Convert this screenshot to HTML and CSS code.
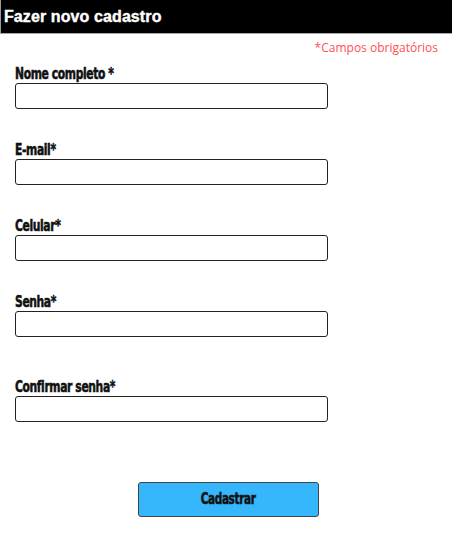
FILE: index.html
```html
<!DOCTYPE html>
<html lang="pt-BR">
<head>
<meta charset="utf-8">
<title>Fazer novo cadastro</title>
<link rel="stylesheet" href="styles.css">
</head>
<body>
<header class="topbar"><h1 class="title">Fazer novo cadastro</h1></header>
<p class="required">*Campos obrigatórios</p>
<form class="form">
  <div class="field"><label class="label" for="nome">Nome completo *</label><input class="input" id="nome" type="text"></div>
  <div class="field"><label class="label" for="email">E-mail*</label><input class="input" id="email" type="email"></div>
  <div class="field"><label class="label" for="cel">Celular*</label><input class="input" id="cel" type="tel"></div>
  <div class="field"><label class="label" for="senha">Senha*</label><input class="input" id="senha" type="password"></div>
  <div class="field field-wide"><label class="label" for="conf">Confirmar senha*</label><input class="input" id="conf" type="password"></div>
  <div class="actions"><button class="button" type="button"><span class="button-text">Cadastrar</span></button></div>
</form>
</body>
</html>
```
FILE: styles.css
```css
* { box-sizing: border-box; }
body {
  margin: 0;
  background: #fff;
  font-family: "Liberation Sans", Arial, sans-serif;
}
.topbar {
  height: 34px;
  background: #000;
  border-left: 1px solid #9a9a9a;
  border-bottom: 1px solid #a8a8a8;
  display: flex;
  align-items: center;
  padding-left: 3px;
}
.title {
  margin: 0;
  color: #fff;
  font-size: 16px;
  font-weight: bold;
  letter-spacing: 0.1px;
  -webkit-text-stroke: 0.4px #fff;
}
.required {
  margin: 5px 14px 0 0;
  text-align: right;
  color: #ff4f4f;
  font-family: "Open Sans", sans-serif;
  font-size: 12px;
  line-height: 18px;
}
.form {
  padding: 0 0 0 15px;
  margin-top: 8px;
  display: flex;
  flex-direction: column;
}
.field {
  display: flex;
  flex-direction: column;
  align-items: flex-start;
  margin-bottom: 32px;
}
.field-wide { margin-top: 9px; }
.label {
  font-family: "DejaVu Sans", sans-serif;
  font-stretch: condensed;
  font-weight: bold;
  font-size: 15px;
  line-height: 18px;
  color: #111;
  letter-spacing: -0.5px;
  transform: scale(0.8, 1.08);
  transform-origin: left bottom;
  white-space: nowrap;
  -webkit-text-stroke: 0.5px #111;
}
.input {
  width: 313px;
  height: 26px;
  border: 1px solid #222;
  border-radius: 3px;
  background: #fff;
  margin: 0;
}
.actions {
  display: flex;
  padding-left: 123px;
  margin-top: 28px;
}
.button {
  width: 181px;
  height: 35px;
  background: #36b6fd;
  border: 1px solid #444;
  border-radius: 3px;
  display: flex;
  align-items: center;
  justify-content: center;
  padding: 0 0 3px 0;
}
.button-text {
  display: inline-block;
  font-family: "DejaVu Sans", sans-serif;
  font-stretch: condensed;
  font-weight: bold;
  font-size: 15px;
  color: #111;
  letter-spacing: -0.5px;
  transform: scale(0.78, 1.1);
  -webkit-text-stroke: 0.5px #111;
}
```
